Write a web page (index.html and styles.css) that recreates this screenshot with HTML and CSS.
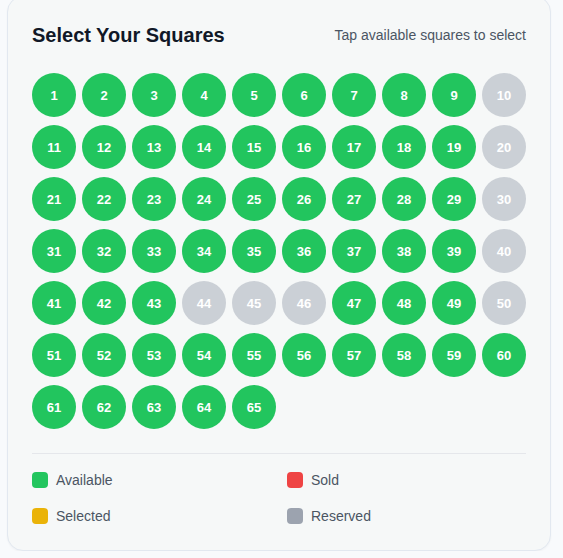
FILE: index.html
```html
<!DOCTYPE html>
<html>
<head>
<meta charset="utf-8">
<link rel="stylesheet" href="styles.css">
</head>
<body>
<div class="card">
  <div class="header">
    <h2 class="title">Select Your Squares</h2>
    <span class="hint">Tap available squares to select</span>
  </div>
  <div class="grid" id="grid"></div>
  <div class="legend">
    <div class="item"><span class="swatch available"></span>Available</div>
    <div class="item"><span class="swatch sold"></span>Sold</div>
    <div class="item"><span class="swatch selected"></span>Selected</div>
    <div class="item"><span class="swatch reserved"></span>Reserved</div>
  </div>
</div>
<script>
  var reserved = [10,20,30,40,44,45,46,50];
  var g = document.getElementById('grid');
  for (var i = 1; i <= 65; i++) {
    var b = document.createElement('div');
    b.className = 'sq ' + (reserved.indexOf(i) >= 0 ? 'res' : 'avail');
    b.textContent = i;
    g.appendChild(b);
  }
</script>
</body>
</html>
```
FILE: styles.css
```css
html, body { margin: 0; padding: 0; }
body {
  background: #f8fafc;
  font-family: "Liberation Sans", Arial, sans-serif;
  padding: 0 12px 0 7px;
}
.card {
  margin-top: -4px;
  width: 494px;
  background: #f6f8f8;
  border: 1px solid #e2e8f0;
  border-radius: 16px;
  padding: 24px;
  box-shadow: 0 1px 2px rgba(0,0,0,0.04);
}
.header {
  display: flex;
  justify-content: space-between;
  align-items: center;
  margin-bottom: 24px;
}
.title {
  margin: 0;
  font-size: 20px;
  line-height: 28px;
  font-weight: 700;
  color: #111827;
}
.hint {
  font-size: 14px;
  line-height: 20px;
  color: #4b5563;
}
.grid {
  display: grid;
  grid-template-columns: repeat(10, 1fr);
  column-gap: 6px;
  row-gap: 8px;
}
.sq {
  height: 44px;
  border-radius: 50%;
  display: flex;
  align-items: center;
  justify-content: center;
  color: #fff;
  font-weight: 700;
  font-size: 13px;
}
.avail { background: #22c55e; }
.res { background: #cbd0d6; }
.legend {
  margin-top: 24px;
  border-top: 1px solid #e5e7eb;
  padding-top: 16px;
  display: grid;
  grid-template-columns: 1fr 1fr;
  column-gap: 16px;
  row-gap: 16px;
}
.item {
  display: flex;
  align-items: center;
  gap: 8px;
  font-size: 14px;
  line-height: 20px;
  color: #4b5563;
}
.swatch {
  width: 16px;
  height: 16px;
  border-radius: 4px;
  flex: none;
}
.swatch.available { background: #22c55e; }
.swatch.sold { background: #ef4444; }
.swatch.selected { background: #eab308; }
.swatch.reserved { background: #9ca3af; }
```
